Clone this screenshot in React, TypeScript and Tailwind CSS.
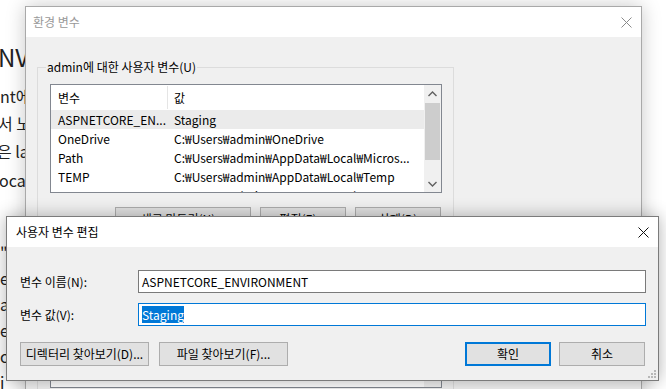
import React from "react";

const font = { fontFamily: '"Noto Sans CJK KR","Noto Sans",sans-serif' };

function CloseIcon({ color }: Readonly<{ color: string }>) {
  return (
    <svg width="11" height="11" viewBox="0 0 11 11" fill="none">
      <path d="M0.5 0.5L10.5 10.5M10.5 0.5L0.5 10.5" stroke={color} strokeWidth="1" />
    </svg>
  );
}

function WinButton({
  width,
  children,
  primary,
}: Readonly<{ width: string; children?: React.ReactNode; primary?: boolean }>) {
  return (
    <div
      className={`flex h-[24px] shrink-0 items-center justify-center bg-[#e1e1e1] text-[12px] text-black ${width} ${
        primary ? "border-2 border-[#0078d7]" : "border border-[#adadad]"
      }`}
    >
      {children}
    </div>
  );
}

const rows = [
  ["ASPNETCORE_EN...", "Staging"],
  ["OneDrive", "C:₩Users₩admin₩OneDrive"],
  ["Path", "C:₩Users₩admin₩AppData₩Local₩Micros..."],
  ["TEMP", "C:₩Users₩admin₩AppData₩Local₩Temp"],
  ["TMP", "C:₩Users₩admin₩AppData₩Local₩Temp"],
];

function VariableList() {
  return (
    <div className="ml-[12px] mt-[16px] flex h-[109px] w-[392px] overflow-hidden border border-[#828790] bg-white">
      <div className="flex w-[373px] flex-col">
        <div className="flex h-[25px] shrink-0 items-center">
          <div className="w-[116px] pl-[7px]">변수</div>
          <div className="h-[23px] w-px bg-[#e5e5e5]" />
          <div className="pl-[6px]">값</div>
        </div>
        {rows.map(([name, value], i) => (
          <div
            key={name}
            className={`flex h-[19px] shrink-0 items-center whitespace-nowrap ${i === 0 ? "bg-[#ebebeb]" : ""}`}
          >
            <div className="w-[117px] pl-[7px]">{name}</div>
            <div className="pl-[6px]">{value}</div>
          </div>
        ))}
      </div>
      <div className="flex w-[17px] flex-col bg-[#f0f0f0]">
        <div className="flex h-[17px] items-center justify-center">
          <svg width="9" height="6" viewBox="0 0 9 6" fill="none">
            <path d="M0.5 5L4.5 1L8.5 5" stroke="#606060" strokeWidth="1.4" />
          </svg>
        </div>
        <div className="mx-px mt-[1px] h-[57px] bg-[#cdcdcd]" />
        <div className="flex-1" />
        <div className="flex h-[17px] items-center justify-center">
          <svg width="9" height="6" viewBox="0 0 9 6" fill="none">
            <path d="M0.5 1L4.5 5L8.5 1" stroke="#606060" strokeWidth="1.4" />
          </svg>
        </div>
      </div>
    </div>
  );
}

function EnvDialog() {
  return (
    <div className="absolute left-[25px] top-[6px] h-[420px] w-[617px] border border-[#a9a9a9] bg-[#f0f0f0] text-[12px] text-black shadow-[0_0_18px_rgba(0,0,0,0.22)]">
      <div className="flex h-[30px] items-center justify-between bg-white pl-[7px] pr-[9px] text-[#999999]">
        <span>환경 변수</span>
        <CloseIcon color="#8a8a8a" />
      </div>
      <div className="pl-[11px] pt-[30px]">
        <div className="relative h-[180px] w-[417px] border border-[#dcdcdc]">
          <span className="absolute -top-[9px] left-[8px] bg-[#f0f0f0] px-px leading-[16px]">
            admin에 대한 사용자 변수(U)
          </span>
          <VariableList />
          <div className="mt-[14px] flex w-[403px] justify-end gap-[9px]">
            <WinButton width="w-[136px]">새로 만들기(N)...</WinButton>
            <WinButton width="w-[86px]">편집(E)...</WinButton>
            <WinButton width="w-[86px]">삭제(D)</WinButton>
          </div>
        </div>
        <div className="relative mt-[9px] h-[170px] w-[417px] border border-[#dcdcdc]">
          <span className="absolute -top-[9px] left-[8px] bg-[#f0f0f0] px-px leading-[16px]">
            시스템 변수(S)
          </span>
          <div className="ml-[12px] mt-[16px] flex h-[115px] w-[392px] overflow-hidden border border-[#828790] bg-white">
            <div className="w-[373px]" />
            <div className="w-[17px] bg-[#f0f0f0]" />
          </div>
        </div>
      </div>
    </div>
  );
}

function EditDialog() {
  return (
    <div className="absolute left-[6px] top-[216px] flex h-[165px] w-[653px] flex-col border border-[#7b7b7b] bg-[#f0f0f0] text-[12px] text-black shadow-[0_0_16px_rgba(0,0,0,0.3)]">
      <div className="flex h-[30px] shrink-0 items-center justify-between bg-white pl-[9px] pr-[9px]">
        <span>사용자 변수 편집</span>
        <CloseIcon color="#111111" />
      </div>
      <div className="relative flex flex-1 flex-col pl-[13px] pt-[23px]">
        <div className="flex items-center">
          <span className="w-[118px]">변수 이름(N):</span>
          <div className="flex h-[23px] w-[508px] items-center border border-[#7a7a7a] bg-white pl-[3px]">
            ASPNETCORE_ENVIRONMENT
          </div>
        </div>
        <div className="mt-[10px] flex items-center">
          <span className="w-[118px]">변수 값(V):</span>
          <div className="flex h-[23px] w-[508px] items-center border border-[#0078d7] bg-white pl-[3px]">
            <span className="bg-[#0078d7] leading-[17px] text-white">Staging</span>
          </div>
        </div>
        <div className="mt-[16px] flex w-[625px] items-center">
          <WinButton width="w-[129px]">디렉터리 찾아보기(D)...</WinButton>
          <div className="ml-[10px]">
            <WinButton width="w-[129px]">파일 찾아보기(F)...</WinButton>
          </div>
          <div className="flex-1" />
          <WinButton width="w-[86px]" primary>
            확인
          </WinButton>
          <div className="ml-[8px]">
            <WinButton width="w-[86px]">취소</WinButton>
          </div>
        </div>
        <svg className="absolute bottom-[1px] right-[1px]" width="10" height="10" viewBox="0 0 10 10">
          <rect x="7" y="1" width="2" height="2" fill="#b8b8b8" />
          <rect x="4" y="4" width="2" height="2" fill="#b8b8b8" />
          <rect x="7" y="4" width="2" height="2" fill="#b8b8b8" />
          <rect x="1" y="7" width="2" height="2" fill="#b8b8b8" />
          <rect x="4" y="7" width="2" height="2" fill="#b8b8b8" />
          <rect x="7" y="7" width="2" height="2" fill="#b8b8b8" />
        </svg>
      </div>
    </div>
  );
}

export default function App() {
  return (
    <div className="relative h-[389px] w-[666px] overflow-hidden bg-white text-[#222]" style={font}>
      <div className="flex flex-col whitespace-nowrap pt-[40px]">
        <p className="-ml-[2px] text-[24px] leading-[34px]">NV</p>
        <p className="mt-[8px] text-[16px] leading-[28px]">nt에서</p>
        <p className="-ml-[2px] text-[16px] leading-[27px]">서 노출</p>
        <p className="-ml-[3px] text-[16px] leading-[28px]">은 la</p>
        <p className="-ml-[1px] text-[16px] leading-[30px]">ocal</p>
        <div className="mt-[44px] flex flex-col text-[16px] leading-[26px]">
          <p>"</p>
          <p>e</p>
          <p>a</p>
          <p>e</p>
          <p>c</p>
          <p>i</p>
        </div>
      </div>
      <EnvDialog />
      <EditDialog />
    </div>
  );
}
